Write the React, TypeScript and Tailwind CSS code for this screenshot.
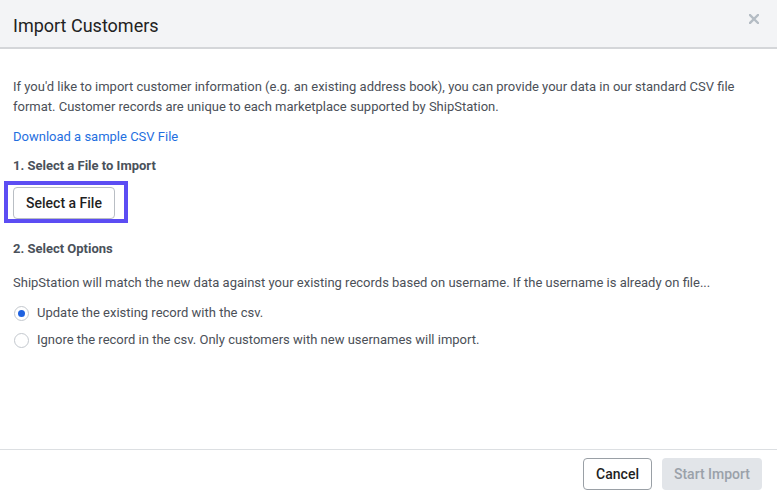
import React from "react";

export default function App() {
  return (
    <div className="w-[777px] h-[496px] bg-white flex flex-col overflow-hidden" style={{ fontFamily: "Roboto, 'Liberation Sans', sans-serif" }}>
      <div className="h-[49px] shrink-0 bg-[#f3f4f6] border-b-2 border-[#d4d6d9] flex items-center justify-between pl-[13px] pr-[18px]">
        <div className="text-[18px] text-[#222] pt-[3px]">Import Customers</div>
        <svg width="10" height="10" viewBox="0 0 10 10" className="mb-[10px]">
          <path d="M1 1L9 9M9 1L1 9" stroke="#b4bcc4" strokeWidth="2.4" strokeLinecap="square" />
        </svg>
      </div>
      <div className="flex-1 px-[13px] pt-[28px] text-[13px] text-[#4b5058]">
        <p className="leading-[19.5px]">
          If you'd like to import customer information (e.g. an existing address book), you can provide your data in our standard CSV file format. Customer records are unique to each marketplace supported by ShipStation.
        </p>
        <div className="mt-[11px] leading-[20px] text-[#1f6fe0]">Download a sample CSV File</div>
        <div className="mt-[9px] leading-[20px] font-bold text-[#4a515a]">1. Select a File to Import</div>
        <div className="mt-[11px] relative w-fit">
          <button className="h-[32px] w-[102px] rounded-[4px] border border-[#b9bec4] bg-white text-[14px] text-[#1f1f1f] font-medium">Select a File</button>
          <div className="absolute left-[-9px] top-[-6px] w-[124px] h-[42px] border-[4px] border-[#5c4df3] pointer-events-none" />
        </div>
        <div className="mt-[20px] leading-[20px] font-bold text-[#4a515a]">2. Select Options</div>
        <div className="mt-[14px] leading-[20px]">
          ShipStation will match the new data against your existing records based on username. If the username is already on file...
        </div>
        <div className="mt-[10px] flex flex-col gap-[7px]">
          <div className="flex items-center h-[20px]">
            <span className="w-[15px] h-[15px] ml-[1px] rounded-full border border-[#c3c8ce] flex items-center justify-center">
              <span className="w-[7px] h-[7px] rounded-full bg-[#1f62e0]" />
            </span>
            <span className="ml-[8px]">Update the existing record with the csv.</span>
          </div>
          <div className="flex items-center h-[20px]">
            <span className="w-[15px] h-[15px] ml-[1px] rounded-full border border-[#c3c8ce]" />
            <span className="ml-[8px]">Ignore the record in the csv. Only customers with new usernames will import.</span>
          </div>
        </div>
      </div>
      <div className="h-[47px] shrink-0 border-t border-[#dcdfe2] flex items-start justify-end gap-[10px] pr-[15px] pt-[8px]">
        <button className="h-[32px] px-[12px] rounded-[4px] border border-[#9aa0a6] bg-white text-[14px] font-medium text-[#1f1f1f]">Cancel</button>
        <button className="h-[32px] px-[12px] rounded-[4px] bg-[#e2e5e9] text-[14px] font-medium text-[#9aa1a9]">Start Import</button>
      </div>
    </div>
  );
}
